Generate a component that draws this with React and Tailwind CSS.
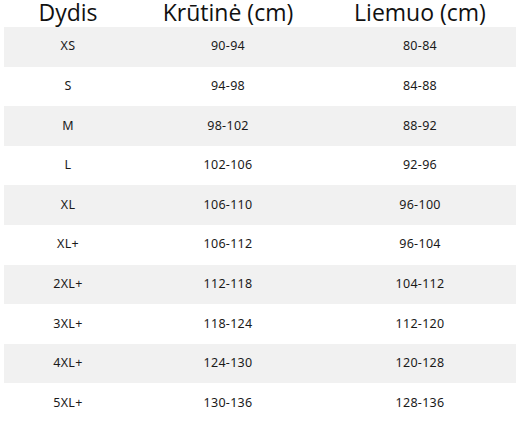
export default function App() {
  const rows = [
    ["XS", "90-94", "80-84"],
    ["S", "94-98", "84-88"],
    ["M", "98-102", "88-92"],
    ["L", "102-106", "92-96"],
    ["XL", "106-110", "96-100"],
    ["XL+", "106-112", "96-104"],
    ["2XL+", "112-118", "104-112"],
    ["3XL+", "118-124", "112-120"],
    ["4XL+", "124-130", "120-128"],
    ["5XL+", "130-136", "128-136"],
  ];
  return (
    <div className="w-[521px] h-[422px] bg-white overflow-hidden">
      <div className="ml-[4px] w-[512px]">
        <div
          className="grid grid-cols-[128px_192px_192px] h-[27px] text-[23px] leading-[25px] text-[#111]"
          style={{ fontFamily: '"Open Sans", "Noto Sans", sans-serif' }}
        >
          <div className="text-center">Dydis</div>
          <div className="text-center">Krūtinė (cm)</div>
          <div className="text-center">Liemuo (cm)</div>
        </div>
        {rows.map((r, i) => (
          <div
            key={r[0]}
            className={`grid grid-cols-[128px_192px_192px] h-[39.6px] items-center text-[12.5px] tracking-[0.3px] text-[#1a1a1a] ${
              i % 2 === 0 ? "bg-[#f1f1f1]" : "bg-white"
            }`}
            style={{ fontFamily: '"Noto Sans", "Open Sans", sans-serif' }}
          >
            <div className="text-center">{r[0]}</div>
            <div className="text-center">{r[1]}</div>
            <div className="text-center">{r[2]}</div>
          </div>
        ))}
      </div>
    </div>
  );
}
